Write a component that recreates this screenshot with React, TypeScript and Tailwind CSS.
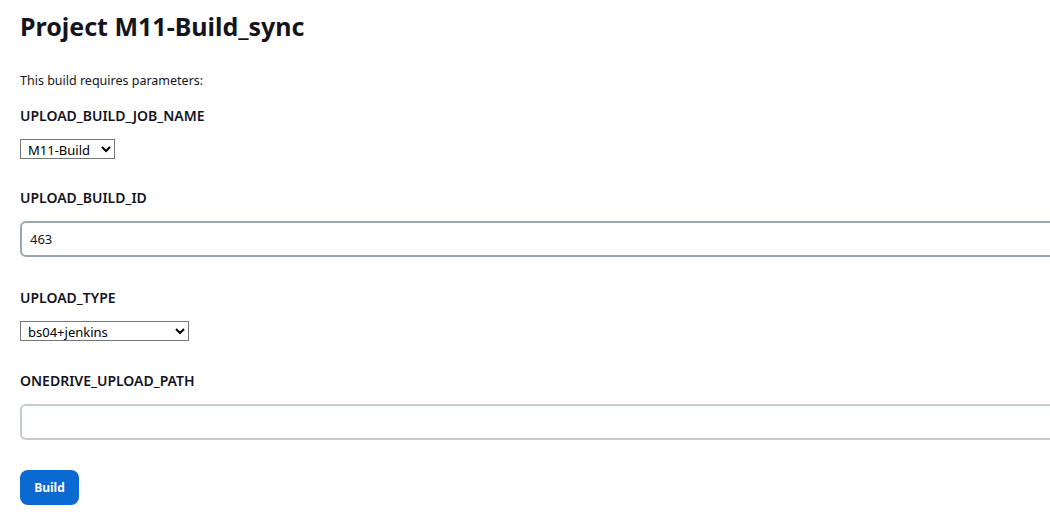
import { useState } from 'react';

const font = { fontFamily: '"Noto Sans", "Open Sans", sans-serif' };

function Label({ children }: { children: string }) {
    return <div className="text-[14px] font-semibold text-[#14141f] leading-[20px]">{children}</div>;
}

export default function App() {
    const [jobName, setJobName] = useState('M11-Build');
    const [buildId, setBuildId] = useState('463');
    const [uploadType, setUploadType] = useState('bs04+jenkins');
    const [path, setPath] = useState('');

    return (
        <div className="w-[1050px] h-[520px] overflow-hidden bg-white text-[#14141f]" style={font}>
            <div className="pl-5 w-[1100px]">
                {/* Header */}
                <h1 className="text-[25px] font-bold leading-[32px] pt-[10px]">Project M11-Build_sync</h1>

                <p className="text-[12.5px] leading-[20px] mt-[29px]">This build requires parameters:</p>

                {/* Parameters */}
                <div className="mt-[15px]">
                    <Label>UPLOAD_BUILD_JOB_NAME</Label>
                    <select
                        value={jobName}
                        onChange={(e) => setJobName(e.target.value)}
                        className="mt-[13px] h-[20px] w-[95px] border border-[#767676] bg-white text-[13px] pl-[3px] text-black outline-none"
                        style={font}
                    >
                        <option>M11-Build</option>
                    </select>
                </div>

                <div className="mt-[27px]">
                    <Label>UPLOAD_BUILD_ID</Label>
                    <input
                        value={buildId}
                        onChange={(e) => setBuildId(e.target.value)}
                        className="mt-[13px] block w-full h-[36px] rounded-[6px] border-2 border-[#9ba7af] px-[8px] text-[13px] outline-none"
                        style={font}
                    />
                </div>

                <div className="mt-[31px]">
                    <Label>UPLOAD_TYPE</Label>
                    <select
                        value={uploadType}
                        onChange={(e) => setUploadType(e.target.value)}
                        className="mt-[13px] h-[20px] w-[169px] border border-[#767676] bg-white text-[13px] pl-[3px] text-black outline-none"
                        style={font}
                    >
                        <option>bs04+jenkins</option>
                    </select>
                </div>

                <div className="mt-[28px]">
                    <Label>ONEDRIVE_UPLOAD_PATH</Label>
                    <input
                        value={path}
                        onChange={(e) => setPath(e.target.value)}
                        className="mt-[13px] block w-full h-[36px] rounded-[6px] border-2 border-[#c3cdd1] px-[8px] text-[13px] outline-none"
                        style={font}
                    />
                </div>

                <button className="mt-[30px] h-[35px] w-[59px] rounded-[8px] bg-[#0b69d2] text-white text-[12px] font-bold" style={font}>
                    Build
                </button>
            </div>
        </div>
    );
}
